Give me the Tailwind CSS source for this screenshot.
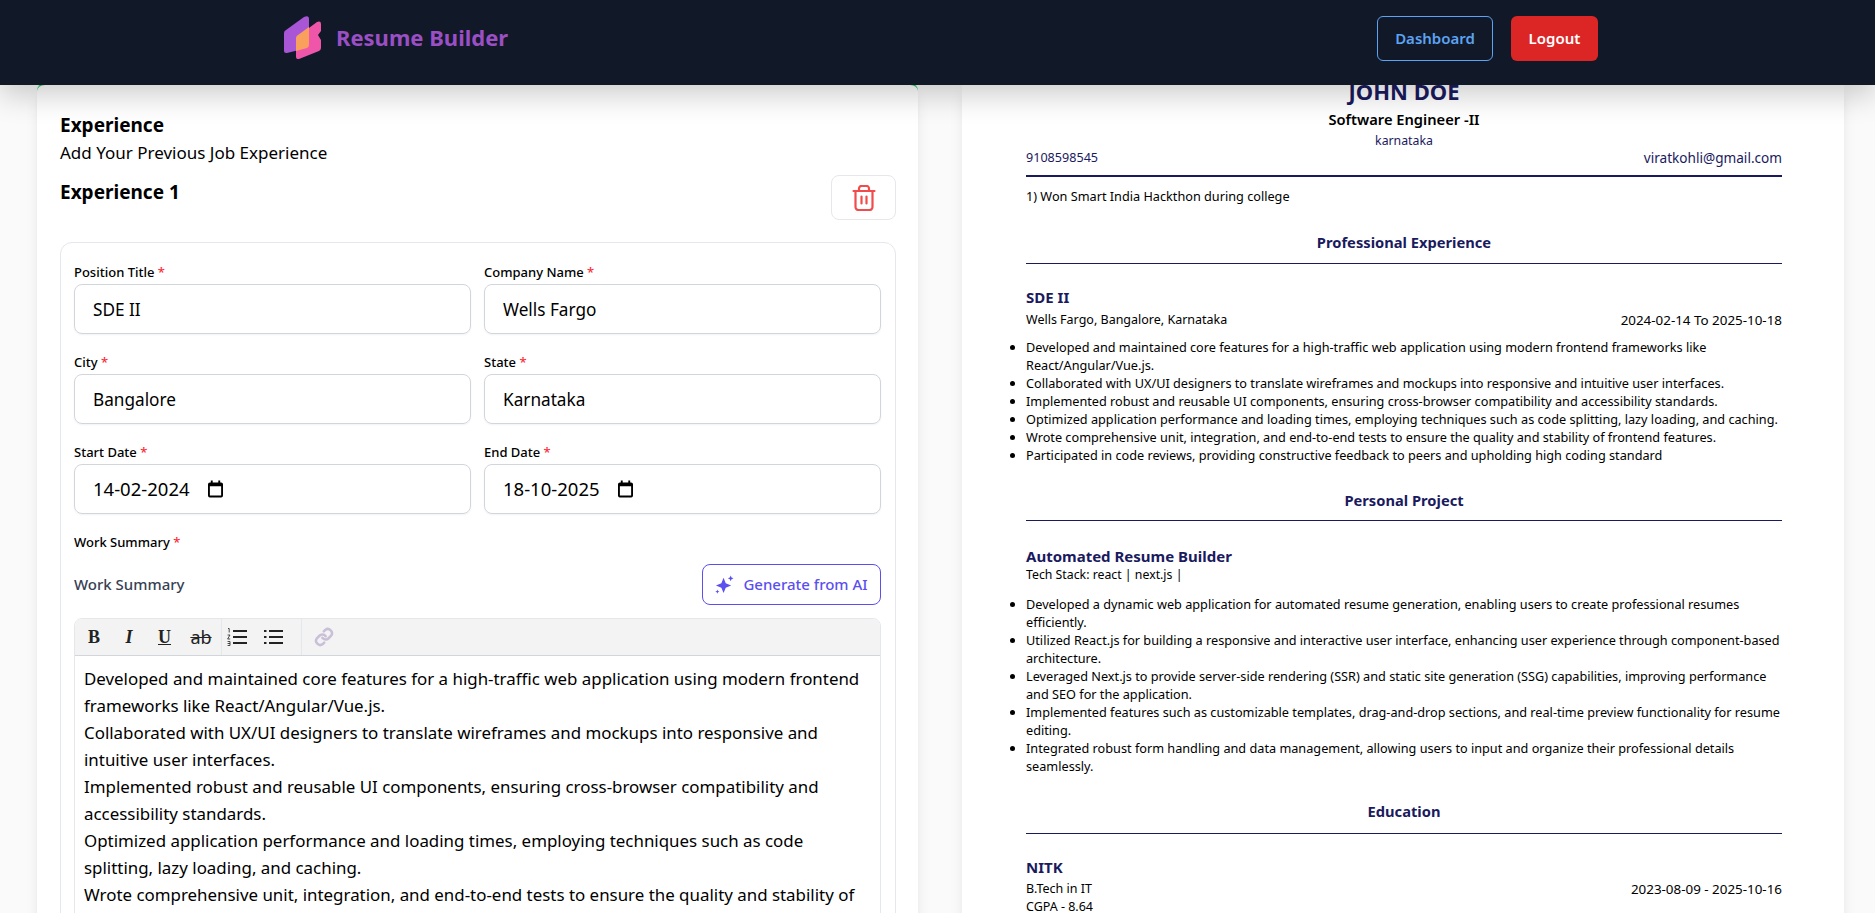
<!DOCTYPE html>
<html lang="en">
<head>
    <meta charset="UTF-8">
    <meta name="viewport" content="width=device-width, initial-scale=1.0">
    <title>Resume Builder</title>
    <script src="https://cdn.jsdelivr.net/npm/@tailwindcss/browser@4"></script>
</head>
<body class="h-screen overflow-hidden bg-[#fafafa] font-['Noto_Sans',sans-serif] text-black">

    <!-- Navbar -->
    <header class="relative z-10 h-[85px] bg-[#111827] flex items-start justify-between pl-[284px] pr-[277px] shadow-[0_10px_30px_rgba(0,0,0,0.2)]">
        <div class="flex items-center gap-[15px] h-[75px]">
            <svg class="w-[37px] h-[43px]" viewBox="0 0 37 43">
                <path d="M2 14 L20 1 Q25 -1 25 3 L25 29 Q25 31 23 32 L3 37 Q0 37.500 0 35 L0 17 Q0 15 2 14Z" fill="#a855d6"/>
                <path d="M14 20 L33 6 Q37 4.500 37 8 L37 15 L34 19 L37 24 L37 32 Q37 34 35 35 L15 43 Q12 43.500 12 41 L12 23 Q12 21 14 20Z" fill="#ef55a8"/>
                <path d="M14 19 L25 11 L25 29 Q25 31 23 32 L12 35 L12 22 Q12 20 14 19Z" fill="#f9a05c"/>
            </svg>
            <span class="text-[22px] font-bold leading-[28px] -mt-[1px] text-[#9b4fc4]">Resume Builder</span>
        </div>
        <nav class="flex gap-[18px] pt-[16px]">
            <a class="w-[116px] h-[45px] rounded-md border border-[#5ca3f2] text-[#5ca3f2] text-[15px] font-semibold flex items-center justify-center">Dashboard</a>
            <a class="w-[87px] h-[45px] rounded-md bg-[#dc2626] text-white text-[15px] font-semibold flex items-center justify-center">Logout</a>
        </nav>
    </header>

    <main class="grid grid-cols-[881px_882px] gap-[44px] items-start pl-[37px] -mt-[2px]">

        <!-- Form card -->
        <section class="bg-white rounded-lg border-t-2 border-[#22c55e] shadow-lg pl-[23px] pr-[22px] pt-[26px] pb-10 h-[900px]">
            <h2 class="text-[19px] font-bold leading-[28px]">Experience</h2>
            <p class="text-[17px] leading-[24px] mt-[2px]">Add Your Previous Job Experience</p>
            <div class="flex justify-between mt-[11px]">
                <h3 class="text-[19px] font-bold leading-[28px] pt-[2px]">Experience 1</h3>
                <button class="w-[65px] h-[45px] -mt-[1px] border border-gray-200 rounded-lg flex items-center justify-center">
                    <svg class="w-[24px] h-[26px]" viewBox="0 0 24 26" fill="none" stroke="#f24b4b" stroke-width="2.200" stroke-linecap="round" stroke-linejoin="round"><path d="M1.500 6h21M7 6V3.500A2.500 2.500 0 0 1 9.500 1h5A2.500 2.500 0 0 1 17 3.500V6M3.500 6v16a3 3 0 0 0 3 3h11a3 3 0 0 0 3-3V6M9.500 11.500v7M14.500 11.500v7"/></svg>
                </button>
            </div>

            <div class="mt-[22px] border border-gray-200 rounded-xl pl-[13px] pr-[14px] pt-[20px] h-[800px]">
                <div class="grid grid-cols-2 gap-x-[13px]">
                    <div>
                        <label class="block text-[13px] font-medium leading-[18px]">Position Title <span class="text-red-500">*</span></label>
                        <div class="mt-[3px] h-[50px] border border-gray-300 rounded-lg flex items-center px-[18px] pt-[1px] text-[17.200px] shadow-xs">SDE II</div>
                    </div>
                    <div>
                        <label class="block text-[13px] font-medium leading-[18px]">Company Name <span class="text-red-500">*</span></label>
                        <div class="mt-[3px] h-[50px] border border-gray-300 rounded-lg flex items-center px-[18px] pt-[1px] text-[17.200px] shadow-xs">Wells Fargo</div>
                    </div>
                    <div class="mt-[19px]">
                        <label class="block text-[13px] font-medium leading-[18px]">City <span class="text-red-500">*</span></label>
                        <div class="mt-[3px] h-[50px] border border-gray-300 rounded-lg flex items-center px-[18px] pt-[1px] text-[17.200px] shadow-xs">Bangalore</div>
                    </div>
                    <div class="mt-[19px]">
                        <label class="block text-[13px] font-medium leading-[18px]">State <span class="text-red-500">*</span></label>
                        <div class="mt-[3px] h-[50px] border border-gray-300 rounded-lg flex items-center px-[18px] pt-[1px] text-[17.200px] shadow-xs">Karnataka</div>
                    </div>
                    <div class="mt-[19px]">
                        <label class="block text-[13px] font-medium leading-[18px]">Start Date <span class="text-red-500">*</span></label>
                        <div class="mt-[3px] h-[50px] border border-gray-300 rounded-lg flex items-center gap-[18px] px-[18px] text-[18.500px] shadow-xs">14-02-2024
                            <svg class="w-[15px] h-[18px]" viewBox="0 0 16 18"><path d="M3 0h2v2h6V0h2v2h1a2 2 0 0 1 2 2v12a2 2 0 0 1-2 2H2a2 2 0 0 1-2-2V4a2 2 0 0 1 2-2h1zM2 6v10h12V6z"/></svg>
                        </div>
                    </div>
                    <div class="mt-[19px]">
                        <label class="block text-[13px] font-medium leading-[18px]">End Date <span class="text-red-500">*</span></label>
                        <div class="mt-[3px] h-[50px] border border-gray-300 rounded-lg flex items-center gap-[18px] px-[18px] text-[18.500px] shadow-xs">18-10-2025
                            <svg class="w-[15px] h-[18px]" viewBox="0 0 16 18"><path d="M3 0h2v2h6V0h2v2h1a2 2 0 0 1 2 2v12a2 2 0 0 1-2 2H2a2 2 0 0 1-2-2V4a2 2 0 0 1 2-2h1zM2 6v10h12V6z"/></svg>
                        </div>
                    </div>
                </div>

                <label class="block mt-[19px] text-[13px] font-medium leading-[18px]">Work Summary <span class="text-red-500">*</span></label>
                <div class="flex items-center justify-between mt-[13px]">
                    <span class="text-[15px] font-medium text-gray-700">Work Summary</span>
                    <button class="w-[179px] h-[41px] rounded-lg border border-[#5b4ff0] text-[#5b4ff0] text-[15px] font-medium flex items-center justify-center gap-[9px]">
                        <svg class="w-[19px] h-[19px]" viewBox="0 0 20 20" fill="currentColor"><path d="M9 3l2.300 5.700L17 11l-5.700 2.300L9 19l-2.300-5.700L1 11l5.700-2.300zM16.500 .5l.9 2.100 2.100.9-2.100.9-.9 2.100-.9-2.100-2.100-.9 2.100-.9zM2.500 15.300l.6 1.600 1.600.6-1.600.6-.6 1.600-.6-1.600-1.600-.6 1.600-.6z"/></svg>
                        Generate from AI
                    </button>
                </div>

                <div class="mt-[13px] border border-gray-200 rounded-lg overflow-hidden">
                    <div class="h-[37px] bg-[#f3f3f3] border-b border-gray-300 flex items-center text-[#222]">
                        <div class="flex items-center h-full border-r border-gray-200 pl-[1px] pr-[2px]">
                            <span class="w-[36px] font-['Liberation_Serif',serif] font-bold text-[18px] text-center">B</span>
                            <span class="w-[34px] font-['Liberation_Serif',serif] font-bold italic text-[18px] text-center">I</span>
                            <span class="w-[37px] font-['Liberation_Serif',serif] font-bold underline text-[18px] text-center">U</span>
                            <span class="w-[36px] line-through text-[18px] text-center">ab</span>
                        </div>
                        <div class="flex items-center h-full border-r border-gray-200 pl-[5px] pr-[18px] gap-[16px]">
                            <svg class="w-[20px] h-[20px]" viewBox="0 0 20 20" fill="none" stroke="#222" stroke-width="2"><path d="M6 4h14M6 10h14M6 16h14"/><path d="M1 1.500h1.200v4M.6 8h2.400L.6 12h2.600M.6 14.500h2.400v4H.6M.6 16.500h2.400" stroke-width="0.800"/></svg>
                            <svg class="w-[20px] h-[20px]" viewBox="0 0 20 20" fill="none" stroke="#222" stroke-width="2"><path d="M6 4h14M6 10h14M6 16h14"/><path d="M1 4h2.500M1 10h2.500M1 16h2.500"/></svg>
                        </div>
                        <svg class="ml-[12px] w-[20px] h-[20px]" viewBox="0 0 24 24" fill="none" stroke="#c9c0d8" stroke-width="3" stroke-linecap="round"><path d="M10 13a5 5 0 0 0 7.500.5l3-3a5 5 0 0 0-7-7l-1.700 1.700"/><path d="M14 11a5 5 0 0 0-7.500-.5l-3 3a5 5 0 0 0 7 7l1.700-1.700"/></svg>
                    </div>
                    <div class="px-[9px] pt-[9px] pb-4 text-[16.900px] leading-[27px]">
                        <p>Developed and maintained core features for a high-traffic web application using modern frontend frameworks like React/Angular/Vue.js.</p>
                        <p>Collaborated with UX/UI designers to translate wireframes and mockups into responsive and intuitive user interfaces.</p>
                        <p>Implemented robust and reusable UI components, ensuring cross-browser compatibility and accessibility standards.</p>
                        <p>Optimized application performance and loading times, employing techniques such as code splitting, lazy loading, and caching.</p>
                        <p>Wrote comprehensive unit, integration, and end-to-end tests to ensure the quality and stability of frontend features.</p>
                    </div>
                </div>
            </div>
        </section>

        <!-- Resume preview -->
        <section class="-mt-[3px] bg-white shadow-lg pl-[64px] pr-[62px] h-[900px] text-[#1a1a5e]">
            <h1 class="text-center text-[22px] font-bold leading-[28px] -mt-[3px]">JOHN DOE</h1>
            <p class="text-center text-[14.700px] font-semibold text-black leading-[20px] mt-[4px]">Software Engineer -II</p>
            <p class="text-center text-[12.300px] leading-[18px] mt-[3px]">karnataka</p>
            <div class="flex justify-between leading-[18px] -mt-[1px] pb-[8px] border-b-2 border-[#1a1a5e]">
                <span class="text-[12.600px]">9108598545</span><span class="text-[13.600px]">viratkohli@gmail.com</span>
            </div>
            <p class="text-[12.700px] text-black leading-[18px] mt-[10px]">1) Won Smart India Hackthon during college</p>

            <h2 class="text-center text-[14.700px] font-bold leading-[20px] mt-[27px] pb-[11px] border-b border-[#1a1a5e]">Professional Experience</h2>
            <h3 class="text-[15px] font-bold leading-[20px] mt-[23px]">SDE II</h3>
            <div class="flex justify-between text-black leading-[18px] mt-[4px]">
                <span class="text-[12.500px]">Wells Fargo, Bangalore, Karnataka</span><span class="text-[13.400px]">2024-02-14 To 2025-10-18</span>
            </div>
            <ul class="list-disc text-[12.700px] text-black leading-[18px] mt-[9px]">
                <li>Developed and maintained core features for a high-traffic web application using modern frontend frameworks like React/Angular/Vue.js.</li>
                <li>Collaborated with UX/UI designers to translate wireframes and mockups into responsive and intuitive user interfaces.</li>
                <li>Implemented robust and reusable UI components, ensuring cross-browser compatibility and accessibility standards.</li>
                <li>Optimized application performance and loading times, employing techniques such as code splitting, lazy loading, and caching.</li>
                <li>Wrote comprehensive unit, integration, and end-to-end tests to ensure the quality and stability of frontend features.</li>
                <li>Participated in code reviews, providing constructive feedback to peers and upholding high coding standard</li>
            </ul>

            <h2 class="text-center text-[14.700px] font-bold leading-[20px] mt-[26px] pb-[10px] border-b border-[#1a1a5e]">Personal Project</h2>
            <h3 class="text-[15px] font-bold leading-[20px] mt-[25px]">Automated Resume Builder</h3>
            <p class="text-[12.300px] text-black leading-[16px] mt-[1px]">Tech Stack: react | next.js |</p>
            <ul class="list-disc text-[12.700px] text-black leading-[18px] mt-[12px]">
                <li>Developed a dynamic web application for automated resume generation, enabling users to create professional resumes efficiently.</li>
                <li>Utilized React.js for building a responsive and interactive user interface, enhancing user experience through component-based architecture.</li>
                <li>Leveraged Next.js to provide server-side rendering (SSR) and static site generation (SSG) capabilities, improving performance and SEO for the application.</li>
                <li>Implemented features such as customizable templates, drag-and-drop sections, and real-time preview functionality for resume editing.</li>
                <li>Integrated robust form handling and data management, allowing users to input and organize their professional details seamlessly.</li>
            </ul>

            <h2 class="text-center text-[14.700px] font-bold leading-[20px] mt-[26px] pb-[12px] border-b border-[#1a1a5e]">Education</h2>
            <h3 class="text-[15px] font-bold leading-[20px] mt-[23px]">NITK</h3>
            <div class="flex justify-between text-black leading-[18px] mt-[3px]">
                <span class="text-[12.500px]">B.Tech in IT</span><span class="text-[13.400px]">2023-08-09 - 2025-10-16</span>
            </div>
            <p class="text-[12.500px] text-black leading-[18px]">CGPA - 8.64</p>
        </section>
    </main>

</body>
</html>
